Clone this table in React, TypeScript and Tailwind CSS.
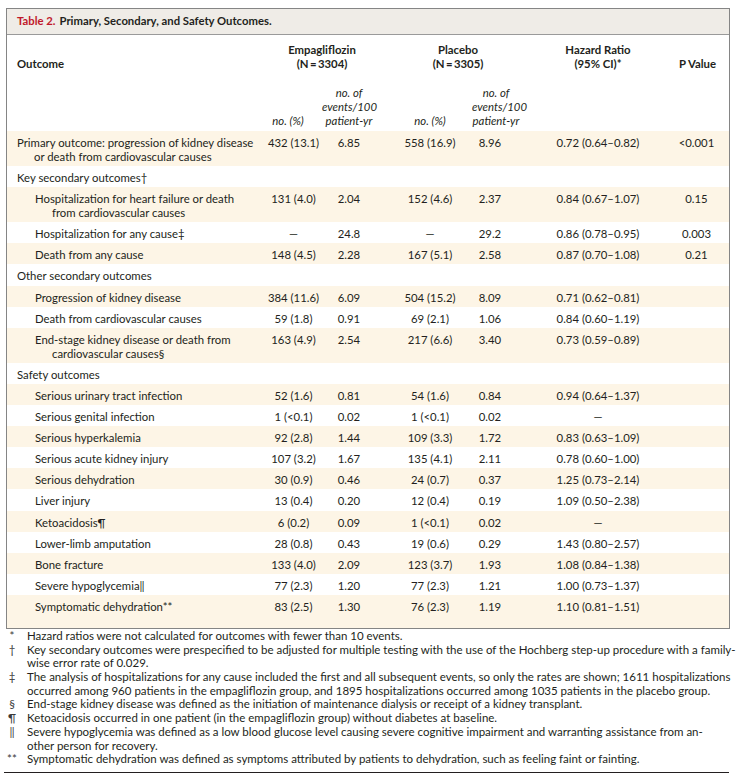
type Values = [string, string, string, string, string, string];

type Row = {
  lines: string[];
  level: 0 | 1;
  values?: Values;
};

const rows: Row[] = [
  {
    lines: ["Primary outcome: progression of kidney disease", "or death from cardiovascular causes"],
    level: 0,
    values: ["432 (13.1)", "6.85", "558 (16.9)", "8.96", "0.72 (0.64–0.82)", "<0.001"],
  },
  { lines: ["Key secondary outcomes†"], level: 0 },
  {
    lines: ["Hospitalization for heart failure or death", "from cardiovascular causes"],
    level: 1,
    values: ["131 (4.0)", "2.04", "152 (4.6)", "2.37", "0.84 (0.67–1.07)", "0.15"],
  },
  {
    lines: ["Hospitalization for any cause‡"],
    level: 1,
    values: ["—", "24.8", "—", "29.2", "0.86 (0.78–0.95)", "0.003"],
  },
  {
    lines: ["Death from any cause"],
    level: 1,
    values: ["148 (4.5)", "2.28", "167 (5.1)", "2.58", "0.87 (0.70–1.08)", "0.21"],
  },
  { lines: ["Other secondary outcomes"], level: 0 },
  {
    lines: ["Progression of kidney disease"],
    level: 1,
    values: ["384 (11.6)", "6.09", "504 (15.2)", "8.09", "0.71 (0.62–0.81)", ""],
  },
  {
    lines: ["Death from cardiovascular causes"],
    level: 1,
    values: ["59 (1.8)", "0.91", "69 (2.1)", "1.06", "0.84 (0.60–1.19)", ""],
  },
  {
    lines: ["End-stage kidney disease or death from", "cardiovascular causes§"],
    level: 1,
    values: ["163 (4.9)", "2.54", "217 (6.6)", "3.40", "0.73 (0.59–0.89)", ""],
  },
  { lines: ["Safety outcomes"], level: 0 },
  {
    lines: ["Serious urinary tract infection"],
    level: 1,
    values: ["52 (1.6)", "0.81", "54 (1.6)", "0.84", "0.94 (0.64–1.37)", ""],
  },
  {
    lines: ["Serious genital infection"],
    level: 1,
    values: ["1 (<0.1)", "0.02", "1 (<0.1)", "0.02", "—", ""],
  },
  {
    lines: ["Serious hyperkalemia"],
    level: 1,
    values: ["92 (2.8)", "1.44", "109 (3.3)", "1.72", "0.83 (0.63–1.09)", ""],
  },
  {
    lines: ["Serious acute kidney injury"],
    level: 1,
    values: ["107 (3.2)", "1.67", "135 (4.1)", "2.11", "0.78 (0.60–1.00)", ""],
  },
  {
    lines: ["Serious dehydration"],
    level: 1,
    values: ["30 (0.9)", "0.46", "24 (0.7)", "0.37", "1.25 (0.73–2.14)", ""],
  },
  {
    lines: ["Liver injury"],
    level: 1,
    values: ["13 (0.4)", "0.20", "12 (0.4)", "0.19", "1.09 (0.50–2.38)", ""],
  },
  {
    lines: ["Ketoacidosis¶"],
    level: 1,
    values: ["6 (0.2)", "0.09", "1 (<0.1)", "0.02", "—", ""],
  },
  {
    lines: ["Lower-limb amputation"],
    level: 1,
    values: ["28 (0.8)", "0.43", "19 (0.6)", "0.29", "1.43 (0.80–2.57)", ""],
  },
  {
    lines: ["Bone fracture"],
    level: 1,
    values: ["133 (4.0)", "2.09", "123 (3.7)", "1.93", "1.08 (0.84–1.38)", ""],
  },
  {
    lines: ["Severe hypoglycemia‖"],
    level: 1,
    values: ["77 (2.3)", "1.20", "77 (2.3)", "1.21", "1.00 (0.73–1.37)", ""],
  },
  {
    lines: ["Symptomatic dehydration**"],
    level: 1,
    values: ["83 (2.5)", "1.30", "76 (2.3)", "1.19", "1.10 (0.81–1.51)", ""],
  },
];

const footnotes: { mark: string; lines: string[] }[] = [
  { mark: "*", lines: ["Hazard ratios were not calculated for outcomes with fewer than 10 events."] },
  {
    mark: "†",
    lines: [
      "Key secondary outcomes were prespecified to be adjusted for multiple testing with the use of the Hochberg step-up procedure with a family-",
      "wise error rate of 0.029.",
    ],
  },
  {
    mark: "‡",
    lines: [
      "The analysis of hospitalizations for any cause included the first and all subsequent events, so only the rates are shown; 1611 hospitalizations",
      "occurred among 960 patients in the empagliflozin group, and 1895 hospitalizations occurred among 1035 patients in the placebo group.",
    ],
  },
  {
    mark: "§",
    lines: ["End-stage kidney disease was defined as the initiation of maintenance dialysis or receipt of a kidney transplant."],
  },
  {
    mark: "¶",
    lines: ["Ketoacidosis occurred in one patient (in the empagliflozin group) without diabetes at baseline."],
  },
  {
    mark: "‖",
    lines: [
      "Severe hypoglycemia was defined as a low blood glucose level causing severe cognitive impairment and warranting assistance from an-",
      "other person for recovery.",
    ],
  },
  {
    mark: "**",
    lines: ["Symptomatic dehydration was defined as symptoms attributed by patients to dehydration, such as feeling faint or fainting."],
  },
];

// label | empa no | empa rate | gap | placebo no | placebo rate | gap | HR | P
const grid = "grid grid-cols-[255px_60px_54px_24px_60px_60px_18px_120px_1fr]";

function TableRow({ row, shaded, last }: { row: Row; shaded: boolean; last: boolean }) {
  const v = row.values;
  return (
    <div
      className={`${grid} pt-[5px] ${last ? "pb-[14px]" : "pb-[2.1px]"} leading-[14px] whitespace-nowrap ${
        shaded ? "bg-[#fdf5e6]" : "bg-white"
      }`}
    >
      <div className={row.level === 0 ? "pl-[10px]" : "pl-[28px]"}>
        {row.lines.map((line, i) => (
          <div key={i} className={i > 0 ? "pl-[17px]" : ""}>
            {line}
          </div>
        ))}
      </div>
      {v && (
        <>
          <div className="pl-[3px] text-center">{v[0]}</div>
          <div className="text-center">{v[1]}</div>
          <div className="col-start-5 text-center">{v[2]}</div>
          <div className="text-center">{v[3]}</div>
          <div className="col-start-8 text-center">{v[4]}</div>
          <div className="pl-[6px] text-center">{v[5]}</div>
        </>
      )}
    </div>
  );
}

export default function App() {
  return (
    <div className="min-h-[781px] bg-white pt-[8px] font-[family-name:Lato,sans-serif] text-[11.35px] text-[#231f20]">
      <div className="ml-[6px] w-[724px] border border-[#858585]">
        <div className="flex h-[26px] items-center border-b border-[#9a9a9a] bg-[#efece7] pl-[10px] text-[11.3px] font-bold">
          <span className="text-[#c0182b]">Table 2.</span>
          <span className="ml-[4px]">Primary, Secondary, and Safety Outcomes.</span>
        </div>

        <div className={`${grid} items-end whitespace-nowrap pt-[8px] leading-[14px] font-bold`}>
          <div className="pl-[10px]">Outcome</div>
          <div className="col-span-2 pl-[6px] text-center">
            Empagliflozin
            <br />
            (N{"\u2009"}={"\u2009"}3304)
          </div>
          <div className="col-span-2 col-start-5 pr-[4px] text-center">
            Placebo
            <br />
            (N{"\u2009"}={"\u2009"}3305)
          </div>
          <div className="col-start-8 text-center">
            Hazard Ratio
            <br />
            (95% CI)*
          </div>
          <div className="pl-[8px] text-center">P Value</div>
        </div>

        <div className={`${grid} items-end whitespace-nowrap pt-[15px] pb-[3px] leading-[14px] italic`}>
          <div className="col-start-2 pr-[8px] text-center">no. (%)</div>
          <div className="text-center">
            no. of
            <br />
            events/100
            <br />
            patient-yr
          </div>
          <div className="col-start-5 text-center">no. (%)</div>
          <div className="pl-[12px] text-center">
            no. of
            <br />
            events/100
            <br />
            patient-yr
          </div>
        </div>

        {rows.map((row, i) => (
          <TableRow key={i} row={row} shaded={i % 2 === 0} last={i === rows.length - 1} />
        ))}
      </div>

      <div className="ml-[4px] w-[725px] border-b border-[#231f20] pb-[6px] text-[11.5px] leading-[13.7px]">
        {footnotes.map((note) => (
          <div key={note.mark} className="flex">
            <div className="w-[16px] shrink-0 text-center text-[#3a3a3a]">{note.mark}</div>
            <div className="ml-[7px]">
              {note.lines.map((line, i) => (
                <div key={i} className="whitespace-nowrap">
                  {line}
                </div>
              ))}
            </div>
          </div>
        ))}
      </div>
    </div>
  );
}
